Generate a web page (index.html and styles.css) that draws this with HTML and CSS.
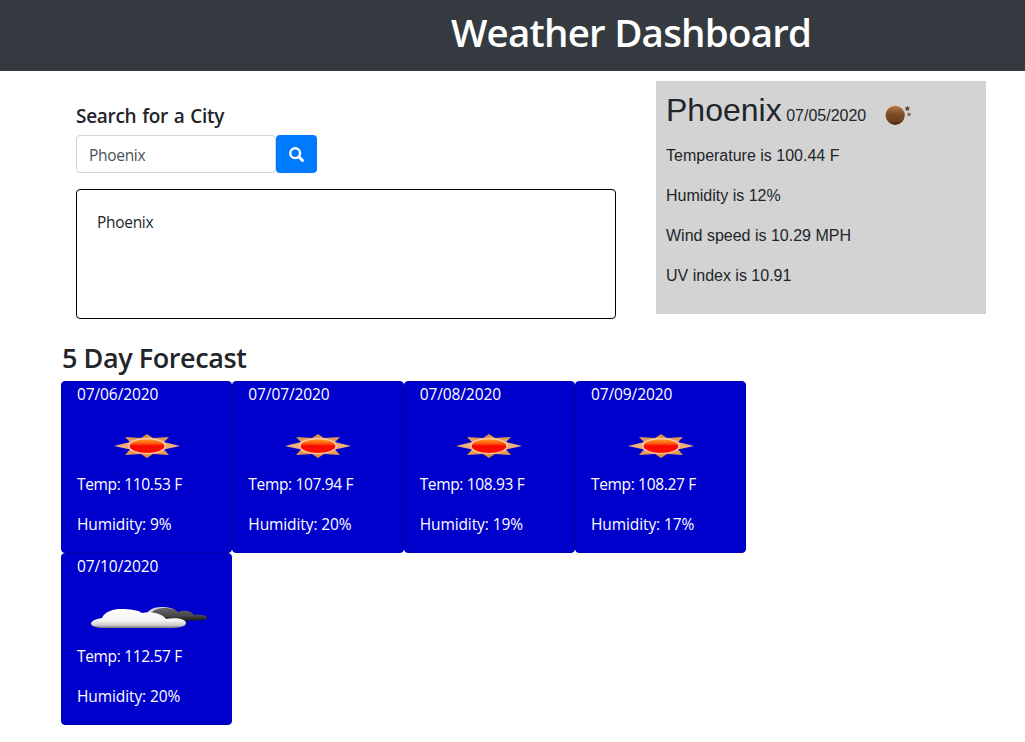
FILE: index.html
```
<!DOCTYPE html>
<html lang="en">
<head>
<meta charset="utf-8">
<title>Weather Dashboard</title>
<link rel="stylesheet" href="styles.css">
</head>
<body>
<svg class="defs" width="0" height="0" aria-hidden="true">
  <defs>
    <linearGradient id="sunRay" x1="0" y1="0" x2="0" y2="1"><stop offset="0" stop-color="#d98a3a"/><stop offset=".5" stop-color="#f0b080"/><stop offset="1" stop-color="#e08a30"/></linearGradient>
    <linearGradient id="sunCore" x1="0" y1="0" x2="0" y2="1"><stop offset="0" stop-color="#ff9d20"/><stop offset=".3" stop-color="#ff5a10"/><stop offset=".5" stop-color="#f80800"/><stop offset="1" stop-color="#ff1200"/></linearGradient>
    <linearGradient id="cloudLight" x1="0" y1="0" x2="0" y2="1"><stop offset="0" stop-color="#fff"/><stop offset=".6" stop-color="#f4f4f4"/><stop offset=".85" stop-color="#ccc"/><stop offset="1" stop-color="#777"/></linearGradient>
    <linearGradient id="cloudDark" x1="0" y1="0" x2="0" y2="1"><stop offset="0" stop-color="#666"/><stop offset=".6" stop-color="#484848"/><stop offset="1" stop-color="#151515"/></linearGradient>
    <linearGradient id="moon" x1="0" y1="0" x2="0" y2="1"><stop offset="0" stop-color="#b57a50"/><stop offset=".45" stop-color="#7c4a28"/><stop offset=".8" stop-color="#70401f"/><stop offset="1" stop-color="#3c2414"/></linearGradient>
    <symbol id="sun" viewBox="0 0 66 24">
      <path fill="url(#sunRay)" d="M33 0 39 4 55 3 50 8 66 12 50 15.5 55 21 39 20 33 24 27 20 11 21 16 15.5 0 12 16 8 11 3 27 4Z"/>
      <ellipse cx="33" cy="12" rx="19" ry="8" fill="#ffd0b4"/>
      <ellipse cx="33" cy="12.1" rx="17.4" ry="6.9" fill="url(#sunCore)"/>
    </symbol>
    <symbol id="clouds" viewBox="0 0 118 22">
      <path fill="#d5d5d5" d="M56 9C57 3 64 0 71 0 78 0 83 1 86 4L80 12 58 13Z"/>
      <path fill="url(#cloudDark)" d="M60 12C58 5 66 1 74 1 81 1 85 2 88 5 97 2 102 5 104 8 112 7 118 9 117 11 116 14 108 13 96 14H74Z"/>
      <path fill="url(#cloudLight)" d="M11 21C-3 20-2 13 12 11 15 4 24 2 31 2 40 2 48 3 52 6 60 4 72 6 76 12 86 10 96 12 96 16 96 20 88 21 80 21Z"/>
    </symbol>
  </defs>
</svg>
<header class="banner"><h1 class="banner-title">Weather Dashboard</h1></header>
<main class="page">
  <div class="top">
    <section class="search">
      <h2 class="search-title">Search for a City</h2>
      <div class="search-row">
        <div class="search-input">Phoenix</div>
        <button class="search-button" aria-label="Search">
          <svg width="15" height="15" viewBox="0 0 15 15"><circle cx="6.2" cy="6.2" r="4.9" fill="none" stroke="#fff" stroke-width="2.4"/><path d="M9.8 9.8 13.5 13.5" stroke="#fff" stroke-width="2.9" stroke-linecap="round"/></svg>
        </button>
      </div>
      <div class="history">Phoenix</div>
    </section>
    <section class="current">
      <div class="current-head">
        <span class="current-city">Phoenix</span>
        <span class="current-date">07/05/2020</span>
        <svg class="current-icon" width="28" height="22" viewBox="0 0 28 22"><circle cx="10.7" cy="11" r="10" fill="#ead0bd"/><circle cx="11.2" cy="11.3" r="9.6" fill="url(#moon)"/><path fill="#5d4334" d="M23.4 1.6 24.3 3.4 26.4 3.6 24.8 5 25.3 7.1 23.4 6 21.5 7.1 22 5 20.4 3.6 22.5 3.4Z"/><path fill="#80604c" d="M25 8 25.7 9.4 27.3 9.7 26.2 10.8 26.5 12.4 25 11.6 23.5 12.4 23.8 10.8 22.7 9.7 24.3 9.4Z"/></svg>
      </div>
      <p class="current-line">Temperature is 100.44 F</p>
      <p class="current-line">Humidity is 12%</p>
      <p class="current-line">Wind speed is 10.29 MPH</p>
      <p class="current-line">UV index is 10.91</p>
    </section>
  </div>
  <h2 class="forecast-title">5 Day Forecast</h2>
  <div class="forecast">
    <article class="card"><p>07/06/2020</p><div class="card-icon"><svg class="sun"><use href="#sun"/></svg></div><p class="temp">Temp: 110.53 F</p><p>Humidity: 9%</p></article>
    <article class="card"><p>07/07/2020</p><div class="card-icon"><svg class="sun"><use href="#sun"/></svg></div><p class="temp">Temp: 107.94 F</p><p>Humidity: 20%</p></article>
    <article class="card"><p>07/08/2020</p><div class="card-icon"><svg class="sun"><use href="#sun"/></svg></div><p class="temp">Temp: 108.93 F</p><p>Humidity: 19%</p></article>
    <article class="card"><p>07/09/2020</p><div class="card-icon"><svg class="sun"><use href="#sun"/></svg></div><p class="temp">Temp: 108.27 F</p><p>Humidity: 17%</p></article>
    <article class="card"><p>07/10/2020</p><div class="card-icon"><svg class="clouds"><use href="#clouds"/></svg></div><p class="temp">Temp: 112.57 F</p><p>Humidity: 20%</p></article>
  </div>
</main>
</body>
</html>
```
FILE: styles.css
```
* { box-sizing: border-box; }
body { margin: 0; background: #fff; color: #212529; font: 400 15.5px/24px "Open Sans", "Noto Sans", sans-serif; }
h1, h2, p { margin: 0; }
.defs { display: block; height: 0; }
.banner { height: 71px; padding: 8px 0 0 451px; background: #343a40; color: #fff; }
.banner-title { font-size: 38.5px; font-weight: 600; line-height: 48px; letter-spacing: -.78px; white-space: nowrap; }
.page { padding: 10px 39px 0 61px; }
.top { display: flex; justify-content: space-between; padding-left: 15px; }
.search { width: 540px; padding-top: 23px; }
.search-title { font-size: 19px; font-weight: 600; line-height: 24px; letter-spacing: -.3px; word-spacing: 1.2px; margin-bottom: 7px; }
.search-row { display: flex; }
.search-input { width: 200px; height: 38px; padding: 7px 12px; border: 1px solid #ced4da; border-radius: 4px; color: #495057; line-height: 25px; letter-spacing: -.3px; }
.search-button { width: 41px; height: 38px; padding: 0; border: 0; border-radius: 4px; background: #007bff; display: flex; align-items: center; justify-content: center; }
.history { height: 130px; margin-top: 16px; padding: 20px; border: 1px solid #000; border-radius: 4px; letter-spacing: -.3px; }
.current { width: 330px; height: 233px; padding: 10px; background: #d3d3d3; font: 400 16px/24px "Liberation Sans", Arial, sans-serif; }
.current-head { display: flex; align-items: baseline; height: 38px; line-height: 38px; margin-bottom: 15px; }
.current-city { font-size: 32px; }
.current-date { margin-left: 4.5px; }
.current-icon { align-self: flex-end; margin: 0 0 3px 17.5px; }
.current-line { margin-bottom: 16px; }
.forecast-title { margin-top: 22px; padding-left: 1px; font-size: 27px; font-weight: 600; line-height: 34px; letter-spacing: -.42px; }
.forecast { display: grid; grid-template-columns: repeat(4, 171.33px); grid-auto-rows: 172px; margin-top: 6px; }
.card { padding: 0 15px; border: 1px solid #0000b4; border-radius: 4px; background: #0000cd; color: #fff; letter-spacing: -.1px; }
.card p { margin-bottom: 16px; white-space: nowrap; }
.card .temp { letter-spacing: -.34px; }
.card-icon { display: flex; align-items: center; justify-content: center; height: 50px; padding-bottom: 3px; }
.sun { width: 66px; height: 24px; }
.clouds { width: 118px; height: 22px; margin-left: 4px; }
```
